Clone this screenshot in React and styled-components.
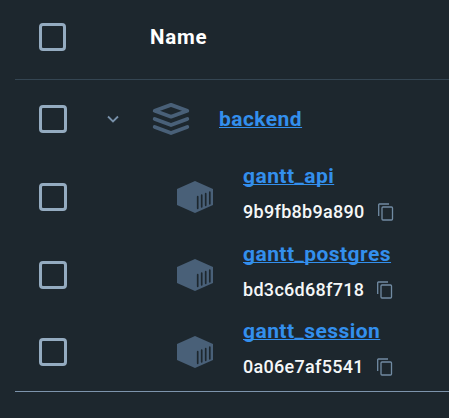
import React from "react";
import styled, { createGlobalStyle } from "styled-components";

const GlobalStyle = createGlobalStyle`
  * { box-sizing: border-box; }
  body {
    margin: 0;
    background: #1d272e;
    font-family: Roboto, "Liberation Sans", sans-serif;
    overflow: hidden;
  }
`;

const Table = styled.main`
  width: 449px;
  height: 418px;
  padding-left: 15px;
  background: #1d272e;
`;

const HeaderRow = styled.header`
  display: flex;
  align-items: center;
  height: 80px;
  padding: 0 0 5px 24px;
  border-bottom: 1px solid #344552;
`;

const Body = styled.section`
  padding-bottom: 1px;
  border-bottom: 1px solid #7d94ac;
`;

const Row = styled.div`
  display: flex;
  align-items: center;
  height: ${(p) => p.$height || 78}px;
  padding-left: 24px;
`;

const Checkbox = styled.span`
  flex: none;
  width: ${(p) => p.$width || 28}px;
  height: 28px;
  border: 3px solid #94abc0;
  border-radius: 4px;
`;

const ColumnTitle = styled.span`
  margin-left: 84px;
  color: #fff;
  font-size: 20.5px;
  font-weight: 700;
  line-height: 24px;
  letter-spacing: 0.75px;
`;

const Chevron = styled.svg`
  flex: none;
  width: 14px;
  height: 10px;
  margin-left: 39px;
`;

const StackIcon = styled.svg`
  flex: none;
  width: 38px;
  height: 34px;
  margin-left: 32px;
`;

const ContainerIcon = styled.svg`
  flex: none;
  width: 38px;
  height: 34px;
  margin-left: 109px;
`;

const Link = styled.a`
  color: #338fed;
  font-size: 21px;
  font-weight: 700;
  line-height: 26px;
  letter-spacing: 0.45px;
  text-decoration: underline;
  text-decoration-thickness: 1px;
  text-underline-offset: 1px;
  text-decoration-skip-ink: none;
`;

const StackLink = styled(Link)`
  margin-left: 29px;
`;

const Details = styled.div`
  display: flex;
  flex-direction: column;
  align-items: flex-start;
  gap: 12px;
  margin-left: 29px;
  padding-bottom: 8px;
`;

const IdLine = styled.div`
  display: flex;
  align-items: center;
  height: 22px;
  color: #f5f7f8;
  font-size: 18px;
  font-weight: 500;
  line-height: 22px;
  letter-spacing: 0.3px;
`;

const CopyIcon = styled.svg`
  width: 16px;
  height: 18px;
  margin-left: 13px;
`;

const containers = [
  { name: "gantt_api", id: "9b9fb8b9a890", height: 78 },
  { name: "gantt_postgres", id: "bd3c6d68f718", height: 78 },
  { name: "gantt_session", id: "0a06e7af5541", height: 76 },
];

function ContainerRow({ name, id, height }) {
  return (
    <Row $height={height}>
      <Checkbox />
      <ContainerIcon viewBox="0 0 38 34">
        <path d="M19 1 37 9v16L19 33 1 25V9Z" fill="#496078" />
        <path d="M21.7 16.7v11.6M25.7 15.2v11.6M29.7 13.7v11.6M33.8 12.2v11.6" stroke="#1d272e" strokeWidth="1.7" strokeLinecap="round" />
      </ContainerIcon>
      <Details>
        <Link>{name}</Link>
        <IdLine>
          <span>{id}</span>
          <CopyIcon viewBox="0 0 16 18" fill="none" stroke="#718ba3" strokeWidth="1.3">
            <path d="M.7 13V1.7q0-.7.7-.7H11" />
            <rect x="4" y="4" width="10.5" height="13" rx="1" />
          </CopyIcon>
        </IdLine>
      </Details>
    </Row>
  );
}

export default function App() {
  return (
    <>
      <GlobalStyle />
      <Table>
        <HeaderRow>
          <Checkbox $width={27} />
          <ColumnTitle>Name</ColumnTitle>
        </HeaderRow>
        <Body>
          <Row>
            <Checkbox />
            <Chevron viewBox="0 0 14 10">
              <path d="m2 2.5 5 5 5-5" fill="none" stroke="#7891aa" strokeWidth="1.8" />
            </Chevron>
            <StackIcon viewBox="0 0 38 34" fill="none" stroke="#496078" strokeWidth="3.8" strokeLinecap="round" strokeLinejoin="round">
              <path d="M19 2.9 35.3 8.8 19 14.7 2.7 8.8Z" />
              <path d="m2.7 17 16.3 6L35.3 17M2.7 25 19 31 35.3 25" />
            </StackIcon>
            <StackLink>backend</StackLink>
          </Row>
          {containers.map((item) => (
            <ContainerRow key={item.id} {...item} />
          ))}
        </Body>
      </Table>
    </>
  );
}
